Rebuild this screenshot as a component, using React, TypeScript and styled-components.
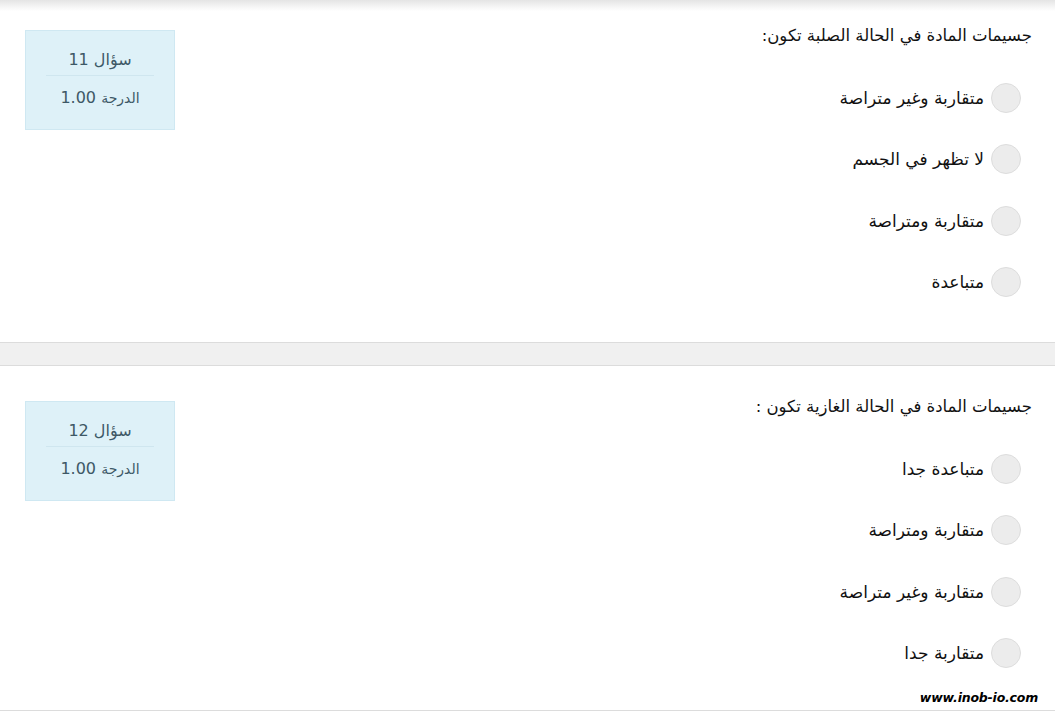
import React from "react";
import styled, { createGlobalStyle } from "styled-components";

const GlobalStyle = createGlobalStyle`
  html, body {
    margin: 0;
    padding: 0;
    background: #fff;
  }
  body {
    font-family: "DejaVu Sans", "Noto Sans", sans-serif;
  }
`;

type Question = {
  number: number;
  text: string;
  options: string[];
};

const questions: Question[] = [
  {
    number: 11,
    text: "جسيمات المادة في الحالة الصلبة تكون:",
    options: [
      "متقاربة وغير متراصة",
      "لا تظهر في الجسم",
      "متقاربة ومتراصة",
      "متباعدة",
    ],
  },
  {
    number: 12,
    text: "جسيمات المادة في الحالة الغازية تكون :",
    options: ["متباعدة جدا", "متقاربة ومتراصة", "متقاربة وغير متراصة", "متقاربة جدا"],
  },
];

const Page = styled.div`
  position: relative;
  width: 1055px;
  height: 714px;
  overflow: hidden;
  background: #fff;
`;

const TopShade = styled.div`
  position: absolute;
  top: 0;
  left: 0;
  right: 0;
  height: 11px;
  background: linear-gradient(#e4e4e4 0%, #eeeeee 35%, rgba(255, 255, 255, 0) 100%);
  pointer-events: none;
`;

const Card = styled.section<{ $top: number; $bottom: number; $last?: boolean }>`
  display: flex;
  direction: rtl;
  justify-content: space-between;
  align-items: flex-start;
  padding: ${({ $top }) => $top}px 23px ${({ $bottom }) => $bottom}px 25px;
  border-bottom: ${({ $last }) => ($last ? "1px solid #dcdcdc" : "none")};
`;

const Content = styled.div`
  display: flex;
  flex-direction: column;
  align-items: flex-start;
`;

const QuestionText = styled.div`
  font-size: 16.5px;
  line-height: 20px;
  color: #111;
  margin-bottom: 21px;
`;

const OptionList = styled.div`
  display: flex;
  flex-direction: column;
  padding-right: 11px;
`;

const OptionRow = styled.label`
  display: flex;
  align-items: center;
  gap: 7px;
  height: 61.5px;
  font-size: 17px;
  color: #111;
`;

const Radio = styled.span`
  width: 28px;
  height: 28px;
  border-radius: 50%;
  background: #ececec;
  border: 1px solid #dddddd;
  flex-shrink: 0;
`;

const InfoBox = styled.div`
  direction: rtl;
  width: 108px;
  height: 98px;
  margin-top: 4px;
  padding: 0 20px;
  background: #def1f8;
  border: 1px solid #cfe8f2;
  color: #3d5866;
  display: flex;
  flex-direction: column;
  align-items: stretch;
`;

const InfoNumber = styled.div`
  text-align: center;
  font-size: 16px;
  line-height: 20px;
  padding: 19px 0 5px;
  border-bottom: 1px solid #cfe6ef;
`;

const InfoGrade = styled.div`
  text-align: center;
  font-size: 16px;
  line-height: 20px;
  padding-top: 12px;

  small {
    font-size: 14px;
  }
`;

const Divider = styled.div`
  height: 22px;
  background: #f0f0f0;
  border-top: 1px solid #dcdcdc;
  border-bottom: 1px solid #dcdcdc;
`;

const Watermark = styled.div`
  position: absolute;
  right: 17px;
  bottom: 9px;
  font-family: "DejaVu Sans", sans-serif;
  font-weight: bold;
  font-style: italic;
  font-size: 12.5px;
  color: #000;
  letter-spacing: -0.2px;
`;

const QuestionCard: React.FC<{ q: Question; top: number; bottom: number; last?: boolean }> = ({
  q,
  top,
  bottom,
  last,
}) => (
  <Card $top={top} $bottom={bottom} $last={last}>
    <Content>
      <QuestionText>{q.text}</QuestionText>
      <OptionList>
        {q.options.map((o, i) => (
          <OptionRow key={i}>
            <Radio />
            <span>{o}</span>
          </OptionRow>
        ))}
      </OptionList>
    </Content>
    <InfoBox>
      <InfoNumber>سؤال {q.number}</InfoNumber>
      <InfoGrade>
        <small>الدرجة</small> 1.00
      </InfoGrade>
    </InfoBox>
  </Card>
);

export default function App() {
  return (
    <Page>
      <GlobalStyle />
      <TopShade />
      <QuestionCard q={questions[0]} top={26} bottom={29} />
      <Divider />
      <QuestionCard q={questions[1]} top={31} bottom={26} last />
      <Watermark>www.inob-io.com</Watermark>
    </Page>
  );
}
